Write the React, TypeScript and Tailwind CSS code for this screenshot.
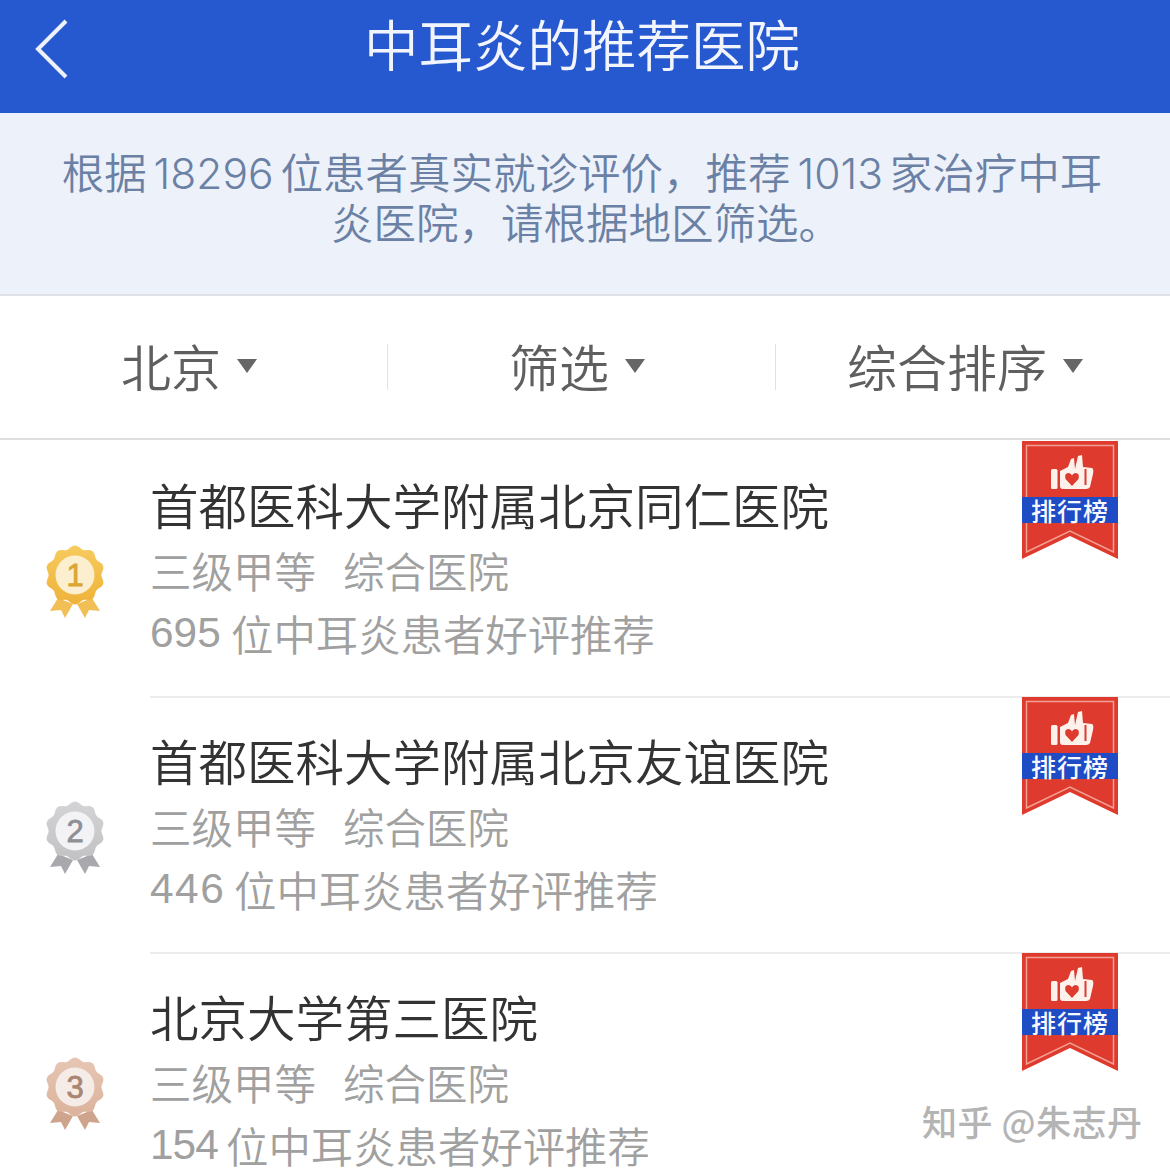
const cjk = "font-['Noto_Sans_CJK_SC','Noto_Sans',sans-serif]"
const latin = "font-['Liberation_Sans','Noto_Sans_CJK_SC',sans-serif]"
const inter = "font-['Inter','Noto_Sans_CJK_SC',sans-serif]"

function Medal({ n, ring, ringDark, light, ribbon, digit }: { n: number; ring: string; ringDark: string; light: string; ribbon: string; digit: string }) {
  // scalloped edge
  const pts: string[] = []
  for (let i = 0; i < 120; i++) {
    const a = (i / 120) * Math.PI * 2
    const r = 28 + 1.6 * Math.cos(a * 10)
    pts.push(`${(30 + r * Math.sin(a)).toFixed(1)},${(30 - r * Math.cos(a)).toFixed(1)}`)
  }
  const id = `medal-${n}`
  return (
    <svg width="60" height="76" viewBox="0 0 60 76" className="block">
      <defs>
        <linearGradient id={id} x1="0" y1="0" x2="0" y2="1">
          <stop offset="0" stopColor={ring} />
          <stop offset="1" stopColor={ringDark} />
        </linearGradient>
      </defs>
      <path d="M13 53 L5 66 L16 65 L20 73 L28 59 Z" fill={ribbon} />
      <path d="M47 53 L55 66 L44 65 L40 73 L32 59 Z" fill={ribbon} />
      <polygon points={pts.join(' ')} fill={`url(#${id})`} />
      <circle cx="30" cy="30" r="19.5" fill={light} />
      <text x="30" y="41" textAnchor="middle" fontSize="31" fill={digit} stroke={digit} strokeWidth="0.8" fontFamily="Liberation Sans, sans-serif">{n}</text>
    </svg>
  )
}

function RankBadge() {
  return (
    <div className="absolute left-[1022px] top-[-1px] w-[96px] h-[118px]">
      <svg width="96" height="118" viewBox="0 0 96 118" className="block">
        <path d="M0 0 H96 V118 L48 95 L0 118 Z" fill="#df3a2e" />
        <path d="M4.5 4.5 H91.5 V111 L48 90 L4.5 111 Z" fill="none" stroke="#f2a093" strokeWidth="1.5" />
        <rect x="29" y="28" width="6.5" height="20" rx="1.5" fill="#fdf1ec" />
        <path d="M38 30 L46 26 L49 18 L52 17 L53 28 L56 15 L60 14 L61 26 L70 27 Q72 28 71 33 L68 46 Q67 48 64 48 H41 Q38 48 38 45 Z" fill="#fdf1ec" />
        <rect x="62.5" y="28" width="2" height="16" fill="#df3a2e" />
        <path d="M50 45 L43.5 38 Q42 32 46.5 32 Q49 32 50 34.5 Q51 32 53.5 32 Q58 32 56.5 38 Z" fill="#df3a2e" />
        <rect x="0" y="56" width="96" height="26" fill="#1f4bc4" />
      </svg>
      <div className="absolute left-0 right-0 top-[56px] h-[26px] flex items-center justify-center text-[25px] leading-none tracking-[1px] font-medium text-[#f7f8ff]">
        排行榜
      </div>
    </div>
  )
}

const rows = [
  { name: '首都医科大学附属北京同仁医院', count: '695', countClass: 'w-[81px]', n: 1, ring: '#f6cb5e', ringDark: '#efb239', light: '#fbefcf', ribbon: '#f2bf57', digit: '#dca530' },
  { name: '首都医科大学附属北京友谊医院', count: '446', countClass: 'w-[84px] tracking-[1.5px]', n: 2, ring: '#d4d4d6', ringDark: '#c2c2c5', light: '#f3f3f5', ribbon: '#a9a9ad', digit: '#8f8f96' },
  { name: '北京大学第三医院', count: '154', countClass: 'w-[76px] tracking-[-1px]', n: 3, ring: '#e6c6b3', ringDark: '#dcb39c', light: '#f5ebe7', ribbon: '#cfa48c', digit: '#a98672' },
]

function FilterItem({ label, divider }: { label: string; divider?: boolean }) {
  return (
    <div className={`relative flex-1 flex items-center justify-center gap-[16px] pr-[10px] ${divider ? "after:content-[''] after:absolute after:right-0 after:top-[48px] after:h-[46px] after:w-px after:bg-[#e2e2e2]" : ''}`}>
      <span className="mb-[4px] text-[50px] leading-none font-[350] text-[#5f5f5f]">{label}</span>
      <span className="w-0 h-0 border-x-[10px] border-x-transparent border-t-[14px] border-t-[#666] mt-[-2px]" />
    </div>
  )
}

export default function App() {
  return (
    <div className={`relative w-[1170px] h-[1170px] overflow-hidden bg-white ${cjk}`}>
      <header className="relative h-[113px] bg-[#2659cf] flex items-center justify-center pr-[6px] pb-[26px]">
        <svg width="36" height="62" viewBox="0 0 36 62" className="absolute left-[34px] top-[18px]">
          <path d="M32 3 L4 31 L32 59" fill="none" stroke="#eef2fb" strokeWidth="4" />
        </svg>
        <h1 className="text-[54.5px] leading-none font-[350] text-[#f2f5fd]">中耳炎的推荐医院</h1>
      </header>

      <div className={`h-[183px] bg-[#edf1f9] border-b-2 border-[#dfe1e6] pt-[36px] pr-[6px] text-center text-[42.5px] leading-[50px] font-[350] text-[#6a80a4] [word-spacing:-5px] ${inter}`}>
        <p>根据 18296 位患者真实就诊评价，推荐 1013 家治疗中耳</p>
        <p className="pl-[8px]">炎医院，请根据地区筛选。</p>
      </div>

      <nav className="flex h-[144px] border-b-2 border-[#dedede] pr-[6px]">
        <FilterItem label="北京" divider />
        <FilterItem label="筛选" divider />
        <FilterItem label="综合排序" />
      </nav>

      <div className="pt-[2px]">
        {rows.map((r) => (
          <div key={r.n} className="relative flex h-[256px]">
            <div className="w-[150px] shrink-0 pl-[45px] pt-[103px]">
              <Medal n={r.n} ring={r.ring} ringDark={r.ringDark} light={r.light} ribbon={r.ribbon} digit={r.digit} />
            </div>
            <div className="flex-1 border-b-2 border-[#ececec] pt-[32px]">
              <div className="text-[48.5px] leading-[60px] font-[350] text-[#333]">{r.name}</div>
              <div className="mt-[11px] flex gap-[27px] text-[41.5px] leading-[50px] font-[350] text-[#a0a0a0]">
                <span>三级甲等</span>
                <span>综合医院</span>
              </div>
              <div className="mt-[13px] flex text-[42.4px] leading-[50px] font-[350] text-[#a0a0a0]">
                <span className={`shrink-0 ${latin} ${r.countClass}`}>{r.count}</span>
                <span>位中耳炎患者好评推荐</span>
              </div>
            </div>
            <RankBadge />
          </div>
        ))}
      </div>

      <div className="absolute left-[922px] top-[1101px] text-[35px] leading-[40px] tracking-[0.5px] font-medium text-[#b4b4b4] whitespace-nowrap [text-shadow:1px_1px_0_#fff]">
        知乎 @朱志丹
      </div>
    </div>
  )
}
